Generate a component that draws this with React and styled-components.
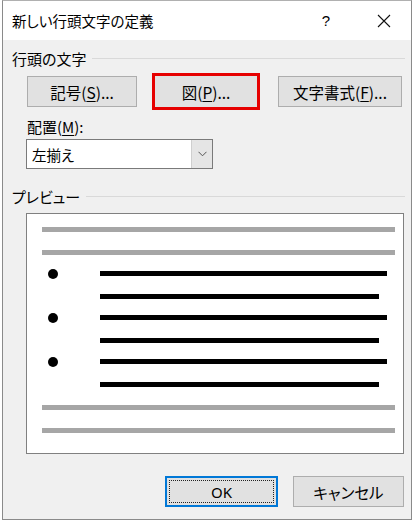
import React from 'react';
import styled, { createGlobalStyle } from 'styled-components';

const GlobalStyle = createGlobalStyle`
  html, body {
    margin: 0;
    padding: 0;
    background: #ffffff;
  }
  body {
    font-family: "Noto Sans CJK JP", "Noto Sans", sans-serif;
    font-size: 14px;
    color: #000;
    font-feature-settings: "palt";
  }
`;

const bullets = [0, 1, 2];

const App = () => {
  return (
    <>
      <GlobalStyle />
      <Dialog>
        <TitleBar>
          <Title>新しい行頭文字の定義</Title>
          <TitleButtons>
            <Help>?</Help>
            <Close>
              <svg width="14" height="14" viewBox="0 0 14 14">
                <path d="M1 1 L13 13 M13 1 L1 13" stroke="#111" strokeWidth="1.1" fill="none" />
              </svg>
            </Close>
          </TitleButtons>
        </TitleBar>

        <Body>
          <GroupHeader>
            <span>行頭の文字</span>
            <Rule />
          </GroupHeader>

          <ButtonRow>
            <Button width={110}>記号(<u>S</u>)...</Button>
            <Highlight>
              <Button width={102}>図(<u>P</u>)...</Button>
            </Highlight>
            <Button width={124}>文字書式(<u>F</u>)...</Button>
          </ButtonRow>

          <FieldLabel>配置(<u>M</u>):</FieldLabel>
          <Select>
            <SelectValue>左揃え</SelectValue>
            <SelectArrow>
              <svg width="9" height="6" viewBox="0 0 9 6">
                <path d="M0.5 0.8 L4.5 4.8 L8.5 0.8" stroke="#555" strokeWidth="1" fill="none" />
              </svg>
            </SelectArrow>
          </Select>

          <GroupHeader top={17}>
            <span>プレビュー</span>
            <Rule />
          </GroupHeader>

          <Preview>
            <GrayLine />
            <GrayLine />
            {bullets.map((b) => (
              <BulletItem key={b}>
                <Dot />
                <Lines>
                  <TextLine />
                  <TextLine short />
                </Lines>
              </BulletItem>
            ))}
            <GrayLine />
            <GrayLine />
          </Preview>

          <Footer>
            <DefaultButton>
              <Focus>OK</Focus>
            </DefaultButton>
            <Button width={111}>キャンセル</Button>
          </Footer>
        </Body>
      </Dialog>
    </>
  );
};

export default App;

const Dialog = styled.div`
  box-sizing: border-box;
  margin-left: 2px;
  width: 410px;
  height: 520px;
  border: 1px solid #8a8a8a;
  border-top-color: #b0b0b0;
  background: #f0f0f0;
`;

const TitleBar = styled.div`
  height: 39px;
  background: #ffffff;
  display: flex;
  align-items: center;
  justify-content: space-between;
  padding-left: 9px;
`;

const Title = styled.div`
  font-size: 14.5px;
`;

const TitleButtons = styled.div`
  display: flex;
  align-items: center;
  height: 100%;
`;

const Help = styled.div`
  width: 46px;
  text-align: center;
  font-family: "Liberation Sans", sans-serif;
  font-size: 15px;
  margin-right: 12px;
`;

const Close = styled.div`
  width: 46px;
  display: flex;
  justify-content: center;
  margin-right: 4px;
`;

const Body = styled.div`
  padding: 8px 6px 0 9px;
`;

const GroupHeader = styled.div`
  display: flex;
  align-items: center;
  gap: 6px;
  height: 20px;
  margin-top: ${(p) => p.top || 0}px;
  font-size: 15px;
`;

const Rule = styled.div`
  flex: 1;
  height: 1px;
  background: #d9d9d9;
`;

const ButtonRow = styled.div`
  display: flex;
  align-items: center;
  margin: 5px 0 0 15px;
`;

const Button = styled.div`
  box-sizing: border-box;
  width: ${(p) => p.width}px;
  height: 31px;
  border: 1px solid #adadad;
  background: #e1e1e1;
  display: flex;
  align-items: center;
  justify-content: center;
  font-size: 15.5px;

  & + & {
    margin-left: 18px;
  }

  u {
    text-underline-offset: 2px;
  }
`;

const Highlight = styled.div`
  border: 3px solid #e60000;
  margin: 0 18px 0 15px;
  display: flex;

  ${Button} {
    border-color: #e1e1e1;
  }
`;

const FieldLabel = styled.div`
  margin: 6px 0 0 15px;
  height: 22px;
  line-height: 22px;
  font-size: 15px;

  u {
    text-underline-offset: 2px;
  }
`;

const Select = styled.div`
  box-sizing: border-box;
  margin: 1px 0 0 14px;
  width: 187px;
  height: 30px;
  border: 1px solid #7a7a7a;
  background: #ffffff;
  display: flex;
`;

const SelectValue = styled.div`
  flex: 1;
  display: flex;
  align-items: center;
  padding-left: 5px;
  font-size: 14.5px;
`;

const SelectArrow = styled.div`
  width: 20px;
  background: #e5e5e5;
  border-left: 1px solid #cfcfcf;
  display: flex;
  align-items: center;
  justify-content: center;
`;

const Preview = styled.div`
  box-sizing: border-box;
  margin: 7px 0 0 14px;
  width: 378px;
  height: 241px;
  border: 1px solid #808080;
  background: #ffffff;
  padding: 13px 8px 0 15px;
  display: flex;
  flex-direction: column;
`;

const GrayLine = styled.div`
  height: 5px;
  background: #a6a6a6;
  margin-bottom: 18px;
`;

const BulletItem = styled.div`
  display: flex;
  align-items: flex-start;
  margin-top: -2px;
`;

const Dot = styled.div`
  width: 10px;
  height: 10px;
  border-radius: 50%;
  background: #000;
  margin: -2px 0 0 6px;
`;

const Lines = styled.div`
  flex: 1;
  margin-left: 42px;
  display: flex;
  flex-direction: column;
`;

const TextLine = styled.div`
  height: 5px;
  background: #000;
  margin-right: ${(p) => (p.short ? 16 : 8)}px;
  margin-bottom: 18px;
`;

const Footer = styled.div`
  display: flex;
  justify-content: flex-end;
  gap: 15px;
  margin-top: 22px;
  padding-right: 1px;
`;

const DefaultButton = styled.div`
  box-sizing: border-box;
  width: 113px;
  height: 31px;
  border: 2px solid #0078d7;
  background: #e1e1e1;
  padding: 2px;
  display: flex;
`;

const Focus = styled.div`
  flex: 1;
  border: 1px dotted #222;
  display: flex;
  align-items: center;
  justify-content: center;
  font-family: "Noto Sans", sans-serif;
  font-size: 15px;
`;
